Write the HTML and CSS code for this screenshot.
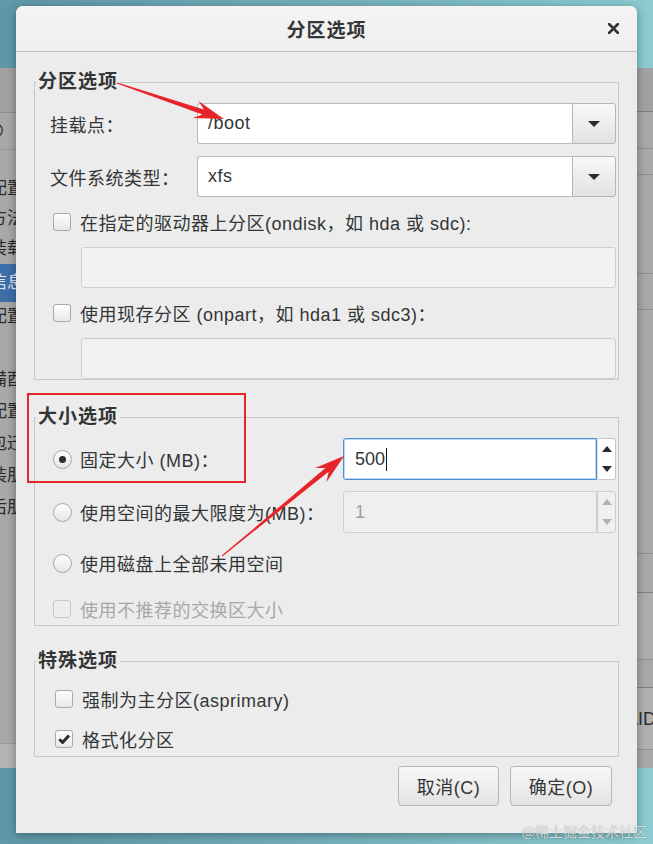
FILE: index.html
```html
<!DOCTYPE html>
<html lang="zh-CN">
  <head>
    <meta charset="UTF-8" />
    <meta name="viewport" content="width=device-width, initial-scale=1.0" />
    <title>分区选项</title>
    <link rel="stylesheet" href="styles.css">
  </head>
  <body>
    <div class="desktop">
      <!-- installer window behind the dialog -->
      <div class="app">
        <div class="side">
          <div class="side-head"></div>
          <div class="side-tool">⊙</div>
          <ul class="side-list">
            <li>配置</li>
            <li>方法</li>
            <li>装载</li>
            <li class="active">信息</li>
            <li>配置</li>
          </ul>
          <ul class="side-list side-list-low">
            <li>備酉</li>
            <li>配置</li>
            <li>包迁</li>
            <li>装朋</li>
            <li>后朋</li>
          </ul>
          <div class="side-foot"></div>
        </div>
        <div class="edge">
          <div class="edge-row edge-head"></div>
          <div class="edge-row edge-tool"></div>
          <div class="edge-row edge-a"></div>
          <div class="edge-row edge-b"></div>
          <div class="edge-row edge-c"></div>
          <div class="edge-row edge-d"></div>
          <div class="edge-row edge-e"></div>
          <div class="edge-row edge-f"></div>
          <div class="edge-row edge-g"></div>
          <div class="edge-row edge-h">RAID</div>
          <div class="edge-rest"></div>
        </div>
      </div>

      <div class="dialog">
        <div class="titlebar">
          <span></span>
          <span class="title">分区选项</span>
          <span class="close">
            <svg width="11" height="11" viewBox="0 0 11 11"><path d="M1 1L10 10M10 1L1 10" stroke="#2e3436" stroke-width="2.6" stroke-linecap="round"/></svg>
          </span>
        </div>

        <div class="dialog-body">
          <fieldset class="frame">
            <legend>分区选项</legend>
            <div class="frame-body">
              <div class="field">
                <span class="field-label">挂载点：</span>
                <div class="combo">
                  <div class="combo-entry">/boot</div>
                  <div class="combo-btn"><span class="caret"></span></div>
                </div>
              </div>
              <div class="field">
                <span class="field-label">文件系统类型：</span>
                <div class="combo">
                  <div class="combo-entry">xfs</div>
                  <div class="combo-btn"><span class="caret"></span></div>
                </div>
              </div>
              <label class="check-row"><span class="check"></span>在指定的驱动器上分区(ondisk，如 hda 或 sdc):</label>
              <div class="entry-off"></div>
              <label class="check-row"><span class="check"></span>使用现存分区 (onpart，如 hda1 或 sdc3)：</label>
              <div class="entry-off"></div>
            </div>
          </fieldset>

          <fieldset class="frame frame-size">
            <legend>大小选项</legend>
            <div class="size-body">
              <div class="size-row">
                <label class="radio-row"><span class="radio on"></span>固定大小 (MB)：</label>
                <div class="spin">
                  <div class="spin-entry">500<span class="cursor"></span></div>
                  <div class="spin-btns"><span class="up"></span><span class="down"></span></div>
                </div>
              </div>
              <div class="size-row">
                <label class="radio-row"><span class="radio"></span>使用空间的最大限度为(MB)：</label>
                <div class="spin spin-off">
                  <div class="spin-entry">1</div>
                  <div class="spin-btns"><span class="up"></span><span class="down"></span></div>
                </div>
              </div>
              <div class="size-row row-all">
                <label class="radio-row"><span class="radio"></span>使用磁盘上全部未用空间</label>
              </div>
              <div class="size-row row-swap">
                <label class="check-row off"><span class="check"></span>使用不推荐的交换区大小</label>
              </div>
            </div>
          </fieldset>

          <fieldset class="frame frame-extra">
            <legend>特殊选项</legend>
            <div class="extra-body">
              <label class="check-row"><span class="check"></span>强制为主分区(asprimary)</label>
              <label class="check-row">
                <span class="check">
                  <svg width="16" height="16" viewBox="0 0 16 16"><path d="M3.3 8.2L6.6 11.5L13 4.4" fill="none" stroke="#2b2b2b" stroke-width="3" stroke-linejoin="round"/></svg>
                </span>格式化分区
              </label>
            </div>
          </fieldset>

          <div class="actions">
            <button class="btn btn-cancel">取消(C)</button>
            <button class="btn btn-ok">确定(O)</button>
          </div>
        </div>
      </div>

      <!-- red annotations drawn on top of the screenshot -->
      <div class="mark-box"></div>
      <svg class="marks" width="653" height="844" viewBox="0 0 653 844">
        <polygon fill="#e8242b" points="116.8,83.5 202.3,114.4 192.7,117.9 224,119 198.4,100.9 203.9,109.6 117.2,82.5"/>
        <polygon fill="#e8242b" points="222.3,556.4 328.6,471.8 326.5,482 344,456 315.1,468 325.4,468 221.7,555.6"/>
      </svg>
      <div class="watermark">@稀土掘金技术社区</div>
    </div>
  </body>
</html>
```

FILE: styles.css
```css
* {
  box-sizing: border-box;
}
body {
  margin: 0;
  font-family: "Liberation Sans", "Noto Sans CJK SC", sans-serif;
  color: #333637;
}
.desktop {
  position: relative;
  width: 653px;
  height: 844px;
  overflow: hidden;
  padding-top: 68px;
  background: linear-gradient(90deg, #5f97a8, #79b6c0 60%, #8ccbd1);
}

/* background window */
.app {
  height: 700px;
  display: flex;
  justify-content: space-between;
  background-color: #a8a8a8;
}
.side {
  width: 17px;
  display: flex;
  flex-direction: column;
  overflow: hidden;
  font-size: 17px;
  color: #2a2a2a;
}
.side-head {
  height: 45px;
  background-color: #a1a1a1;
  border-bottom: 1px solid #8e8e8e;
}
.side-tool {
  height: 37px;
  line-height: 37px;
  margin-left: -12px;
  border-bottom: 1px solid #969696;
}
.side-list {
  list-style: none;
  margin: 24px 0 0;
  padding: 0;
}
.side-list li {
  height: 30px;
  line-height: 30px;
  margin-left: -10px;
  white-space: nowrap;
}
.side-list li.active {
  height: 38px;
  line-height: 38px;
  margin-left: 0;
  text-indent: -10px;
  background-color: #3e6ea8;
  color: #dde6f0;
}
.side-list li:last-child {
  height: 34px;
}
.side-list-low {
  margin-top: 28px;
}
.side-list-low li,
.side-list-low li:last-child {
  height: 32px;
  line-height: 32px;
}
.side-foot {
  margin-top: auto;
  height: 25px;
  background-color: #b4b4b4;
  border-top: 1px solid #999;
}
.edge {
  width: 16px;
  display: flex;
  flex-direction: column;
  overflow: hidden;
}
.edge-row {
  border-bottom: 1px solid #909090;
}
.edge-head {
  height: 44px;
  background-color: #a2a2a2;
  border-bottom-color: #7f7f7f;
}
.edge-tool {
  height: 37px;
}
.edge-a {
  height: 26px;
}
.edge-b {
  height: 99px;
}
.edge-c {
  height: 36px;
}
.edge-d {
  height: 244px;
}
.edge-e {
  height: 39px;
  border-bottom-color: #7f7f7f;
}
.edge-f {
  height: 67px;
  background-color: #adadad;
}
.edge-g {
  height: 28px;
  border-bottom-color: #7f7f7f;
}
.edge-h {
  height: 62px;
  line-height: 62px;
  font-size: 18px;
  margin-left: -24px;
  white-space: nowrap;
  color: #2e2e2e;
  background-color: #b0b0b0;
}
.edge-rest {
  flex: 1;
}

/* dialog */
.dialog {
  position: absolute;
  left: 16px;
  top: 6px;
  width: 621px;
  height: 827px;
  background-color: #ececec;
  border-radius: 7px 7px 0 0;
  box-shadow: 0 2px 10px rgba(0, 0, 0, 0.35);
}
.titlebar {
  height: 46px;
  display: grid;
  grid-template-columns: 1fr auto 1fr;
  align-items: center;
  background: linear-gradient(#f4f4f4, #efefef);
  border-bottom: 1px solid #bdbdbd;
  border-radius: 7px 7px 0 0;
}
.title {
  font-size: 19px;
  font-weight: bold;
  letter-spacing: 1px;
}
.close {
  justify-self: end;
  margin-right: 18px;
  display: flex;
}
.dialog-body {
  padding: 19px 18px 0;
  font-size: 18px;
  letter-spacing: 0.5px;
}
.frame {
  margin: 0;
  padding: 0 2px 0 0;
  min-width: 0;
  border: 1px solid #c9c9c9;
}
.frame legend {
  margin-left: 1px;
  padding: 0 2px;
  font-size: 19px;
  font-weight: bold;
  letter-spacing: 1px;
  line-height: 22px;
}
.frame-size {
  margin-top: 26px;
}
.frame-extra {
  margin-top: 24px;
}
.frame-body {
  display: flex;
  flex-direction: column;
  gap: 12px;
  padding: 10px 0 0 15px;
}
.field {
  display: grid;
  grid-template-columns: 147px 1fr;
  align-items: center;
  height: 41px;
}
.combo {
  display: flex;
  height: 41px;
}
.combo-entry {
  flex: 1;
  padding-left: 10px;
  line-height: 39px;
  background-color: #fff;
  border: 1px solid #bababa;
  border-right: none;
  border-radius: 3px 0 0 3px;
}
.combo-btn {
  width: 44px;
  display: flex;
  align-items: center;
  justify-content: center;
  background: linear-gradient(#f8f8f8, #e2e2e2);
  border: 1px solid #b5b5b5;
  border-radius: 0 3px 3px 0;
}
.caret {
  border-left: 6px solid transparent;
  border-right: 6px solid transparent;
  border-top: 6px solid #2b2b2b;
}
.check-row,
.radio-row {
  display: flex;
  align-items: center;
  gap: 9px;
  height: 26px;
  padding-left: 3px;
  white-space: nowrap;
}
.radio-row {
  gap: 8px;
}
.check {
  width: 18px;
  height: 18px;
  flex-shrink: 0;
  display: flex;
  align-items: center;
  justify-content: center;
  border: 1px solid #a9a9a9;
  border-radius: 3px;
  background: linear-gradient(#fdfdfd, #e8e8e8);
}
.check-row.off {
  color: #a8a8a8;
}
.check-row.off .check {
  border-color: #c8c8c8;
  background: #ececec;
}
.radio {
  width: 19px;
  height: 19px;
  flex-shrink: 0;
  display: flex;
  align-items: center;
  justify-content: center;
  border: 1px solid #a7a7a7;
  border-radius: 50%;
  background: linear-gradient(#fdfdfd, #e6e6e6);
}
.radio.on::after {
  content: "";
  width: 7px;
  height: 7px;
  border-radius: 50%;
  background-color: #2e2e2e;
}
.entry-off {
  height: 41px;
  margin-left: 31px;
  background-color: #f1f1f1;
  border: 1px solid #cfcfcf;
  border-radius: 3px;
}
.size-body {
  display: flex;
  flex-direction: column;
  gap: 11px;
  padding: 10px 0 0 15px;
}
.size-row {
  display: grid;
  grid-template-columns: 293px 1fr;
  align-items: center;
  height: 42px;
}
.row-all {
  height: 38px;
}
.row-swap {
  height: 32px;
}
.spin {
  display: flex;
  height: 42px;
}
.spin-entry {
  flex: 1;
  display: flex;
  align-items: center;
  padding-left: 11px;
  letter-spacing: 0;
  background-color: #fff;
  border: 1px solid #4a8fd8;
  border-radius: 3px 0 0 3px;
  box-shadow: inset 0 0 0 1px rgba(74, 143, 216, 0.35);
}
.cursor {
  width: 1px;
  height: 23px;
  margin-left: 1px;
  background-color: #111;
}
.spin-btns {
  width: 19px;
  display: flex;
  flex-direction: column;
  align-items: center;
  justify-content: space-around;
  background-color: #fff;
  border: 1px solid #c8c8c8;
  border-left-color: #dcdcdc;
  border-radius: 0 3px 3px 0;
}
.up {
  border-left: 5px solid transparent;
  border-right: 5px solid transparent;
  border-bottom: 6px solid #2b2b2b;
}
.down {
  border-left: 5px solid transparent;
  border-right: 5px solid transparent;
  border-top: 6px solid #2b2b2b;
}
.spin-off .spin-entry {
  color: #a0a0a0;
  background-color: #efefef;
  border-color: #cdcdcd;
  box-shadow: none;
}
.spin-off .spin-btns {
  background-color: #efefef;
  border-color: #cdcdcd;
}
.spin-off .up {
  border-bottom-color: #b0b0b0;
}
.spin-off .down {
  border-top-color: #b0b0b0;
}
.extra-body {
  display: flex;
  flex-direction: column;
  gap: 16px;
  padding: 15px 0 5px 17px;
}
.extra-body .check-row {
  height: 24px;
}
.actions {
  display: flex;
  justify-content: flex-end;
  gap: 11px;
  margin-top: 9px;
  padding-right: 7px;
}
.btn {
  height: 40px;
  font-family: inherit;
  font-size: 18px;
  letter-spacing: 0.5px;
  color: #333637;
  background: linear-gradient(#f8f8f8, #e3e3e3);
  border: 1px solid #b6b6b6;
  border-radius: 4px;
}
.btn-cancel {
  width: 101px;
}
.btn-ok {
  width: 102px;
}

/* annotations */
.mark-box {
  position: absolute;
  left: 27px;
  top: 393px;
  width: 219px;
  height: 90px;
  border: 2px solid #e5262b;
}
.marks {
  position: absolute;
  left: 0;
  top: 0;
  pointer-events: none;
}
.watermark {
  position: absolute;
  right: 6px;
  bottom: 3px;
  font-size: 14px;
  font-family: "Noto Sans CJK SC", sans-serif;
  color: rgba(255, 255, 255, 0.75);
  text-shadow: 0 0 1px rgba(0, 0, 0, 0.45);
}
```
